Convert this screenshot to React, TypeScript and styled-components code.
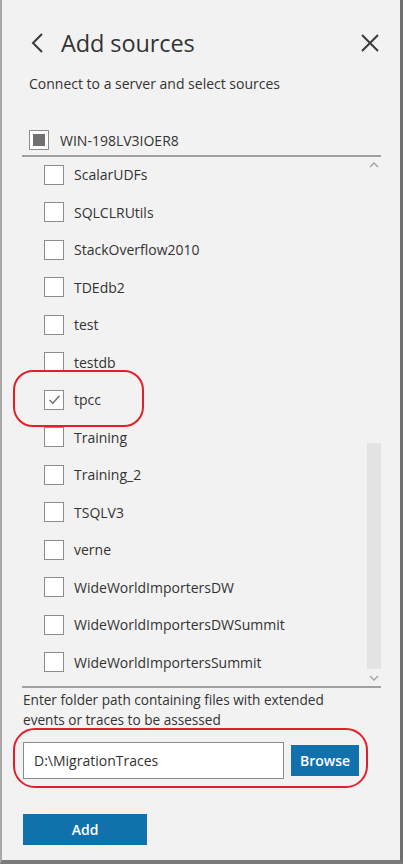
import React from "react";
import styled, { createGlobalStyle } from "styled-components";

const Global = createGlobalStyle`
  html, body { margin: 0; padding: 0; background: #f2f2f2; }
  * { box-sizing: border-box; }
`;

const Panel = styled.div`
  position: relative;
  width: 403px;
  height: 864px;
  background: #f2f2f2;
  border-left: 2px solid #a8a8a8;
  border-right: 3px solid #6f6f6f;
  border-bottom: 4px solid #7a7a7a;
  font-family: "Open Sans", "Noto Sans", sans-serif;
  color: #333;
  padding: 0 19px 0 20px;
  display: flex;
  flex-direction: column;
`;

const Header = styled.div`
  display: flex;
  align-items: center;
  height: 30px;
  margin-top: 28px;
`;

const IconButton = styled.button`
  border: 0;
  background: none;
  padding: 0;
  display: flex;
  align-items: center;
  justify-content: center;
  width: 20px;
  height: 24px;
  color: #3a3a3a;
`;

const Title = styled.h1`
  margin: 0 0 0 14px;
  font-size: 23.5px;
  font-weight: 400;
  letter-spacing: -0.1px;
  flex: 1;
  color: #333;
`;

const Subtitle = styled.div`
  font-size: 14px;
  margin: 16px 0 0 7px;
  color: #333;
`;

const ServerRow = styled.div`
  display: flex;
  align-items: center;
  height: 20px;
  margin: 37px 0 0 7px;
  font-size: 14px;
  gap: 11px;
`;

const Box = styled.span`
  width: 20px;
  height: 20px;
  flex: none;
  background: #fff;
  border: 1px solid #8c8c8c;
  display: flex;
  align-items: center;
  justify-content: center;
`;

const Mixed = styled.span`
  width: 12px;
  height: 12px;
  background: #707070;
`;

const ListFrame = styled.div`
  margin-top: 5px;
  border-top: 2px solid #a0a0a0;
  border-bottom: 2px solid #a0a0a0;
  height: 533px;
  display: flex;
`;

const List = styled.div`
  flex: 1;
  padding-top: 0;
  margin-top: -1px;
`;

const Row = styled.div`
  display: flex;
  align-items: center;
  height: 37.5px;
  padding-left: 22px;
  gap: 10px;
  font-size: 14px;
`;

const ScrollBar = styled.div`
  width: 14px;
  display: flex;
  flex-direction: column;
  align-items: center;
`;

const Arrow = styled.div`
  height: 16px;
  display: flex;
  align-items: center;
  justify-content: center;
`;

const Track = styled.div`
  flex: 1;
  width: 100%;
  display: flex;
  flex-direction: column;
`;

const Thumb = styled.div`
  width: 100%;
  background: #e3e3e3;
`;

const Hint = styled.div`
  font-size: 13.6px;
  line-height: 20px;
  margin: 2px 0 0 1px;
`;

const PathRow = styled.div`
  display: flex;
  align-items: center;
  margin: 12px 0 0 1px;
  gap: 7px;
`;

const PathInput = styled.div`
  width: 261px;
  height: 37px;
  background: #fff;
  border: 1px solid #8a8a8a;
  font-size: 14px;
  display: flex;
  align-items: center;
  padding-left: 10px;
`;

const BlueButton = styled.button<{ $w: number; $h: number }>`
  width: ${(p) => p.$w}px;
  height: ${(p) => p.$h}px;
  background: #1171ad;
  border: 0;
  color: #fff;
  font-family: "Open Sans", "Noto Sans", sans-serif;
  font-size: 14px;
  font-weight: 600;
  padding: 0;
`;

const AddWrap = styled.div`
  margin: 35px 0 0 1px;
`;

const Ring = styled.div`
  position: absolute;
  border: 2px solid #e2202c;
  pointer-events: none;
`;

const Check = () => (
  <svg width="13" height="11" viewBox="0 0 13 11">
    <path d="M1.5 6 L4.8 9.2 L11.5 1.8" fill="none" stroke="#6e6e6e" strokeWidth="1.4" />
  </svg>
);

const items = [
  "ScalarUDFs",
  "SQLCLRUtils",
  "StackOverflow2010",
  "TDEdb2",
  "test",
  "testdb",
  "tpcc",
  "Training",
  "Training_2",
  "TSQLV3",
  "verne",
  "WideWorldImportersDW",
  "WideWorldImportersDWSummit",
  "WideWorldImportersSummit",
];

export default function App() {
  return (
    <>
      <Global />
      <Panel>
        <Header>
          <IconButton aria-label="Back" style={{ marginLeft: 5 }}>
            <svg width="14" height="22" viewBox="0 0 14 22">
              <path d="M12 2 L3 11 L12 20" fill="none" stroke="#3a3a3a" strokeWidth="2" />
            </svg>
          </IconButton>
          <Title>Add sources</Title>
          <IconButton aria-label="Close" style={{ marginRight: 1 }}>
            <svg width="20" height="20" viewBox="0 0 20 20">
              <path d="M2 2 L18 18 M18 2 L2 18" fill="none" stroke="#3a3a3a" strokeWidth="2" />
            </svg>
          </IconButton>
        </Header>
        <Subtitle>Connect to a server and select sources</Subtitle>
        <ServerRow>
          <Box>
            <Mixed />
          </Box>
          WIN-198LV3IOER8
        </ServerRow>
        <ListFrame>
          <List>
            {items.map((name) => (
              <Row key={name}>
                <Box>{name === "tpcc" && <Check />}</Box>
                {name}
              </Row>
            ))}
          </List>
          <ScrollBar>
            <Arrow>
              <svg width="10" height="6" viewBox="0 0 10 6">
                <path d="M1 5 L5 1 L9 5" fill="none" stroke="#a8a8a8" strokeWidth="1.5" />
              </svg>
            </Arrow>
            <Track>
              <div style={{ height: 270 }} />
              <Thumb style={{ height: 226 }} />
            </Track>
            <Arrow>
              <svg width="10" height="6" viewBox="0 0 10 6">
                <path d="M1 1 L5 5 L9 1" fill="none" stroke="#a8a8a8" strokeWidth="1.5" />
              </svg>
            </Arrow>
          </ScrollBar>
        </ListFrame>
        <Hint>
          Enter folder path containing files with extended
          <br />
          events or traces to be assessed
        </Hint>
        <PathRow>
          <PathInput>D:\MigrationTraces</PathInput>
          <BlueButton $w={68} $h={31}>Browse</BlueButton>
        </PathRow>
        <AddWrap>
          <BlueButton $w={124} $h={31}>Add</BlueButton>
        </AddWrap>
        <Ring style={{ left: 11, top: 370, width: 131, height: 57, borderRadius: 20 }} />
        <Ring style={{ left: 11, top: 728, width: 355, height: 60, borderRadius: 22 }} />
      </Panel>
    </>
  );
}
